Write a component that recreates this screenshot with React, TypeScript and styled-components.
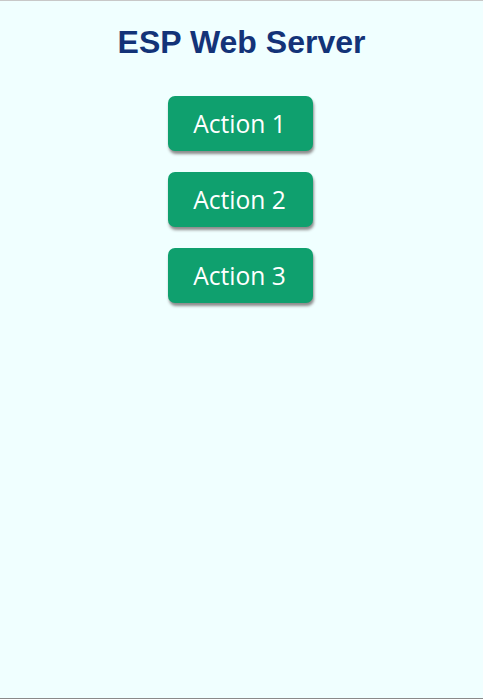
import React from 'react';
import styled, { createGlobalStyle } from 'styled-components';

const GlobalStyle = createGlobalStyle`
    html, body {
        margin: 0;
        padding: 0;
        background: #f0ffff;
    }
`;

const Page = styled.div`
    min-height: 100vh;
    box-sizing: border-box;
    border-top: 1px solid #c8c8c8;
    display: flex;
    flex-direction: column;
    align-items: center;
    padding-top: 23px;
`;

const Title = styled.h1`
    margin: 0 0 35px;
    font-family: "Liberation Sans", Arial, sans-serif;
    font-size: 32px;
    font-weight: bold;
    color: #133378;
    text-align: center;
`;

const ButtonList = styled.div`
    display: flex;
    flex-direction: column;
    align-items: center;
    gap: 21px;
    margin-right: 2px;
`;

const ActionButton = styled.button`
    width: 145px;
    height: 55px;
    padding: 0 2px 0 0;
    border: none;
    border-radius: 7px;
    background: #0fa06e;
    color: #ffffff;
    font-family: "Open Sans", sans-serif;
    font-size: 24.6px;
    box-shadow: 1px 3px 3px #8c8c8c;
    cursor: pointer;
`;

const Footer = styled.div`
    margin-top: auto;
    width: 100%;
    height: 1px;
    background: #8a8a8a;
`;

const actions = ['Action 1', 'Action 2', 'Action 3'];

const App: React.FC = () => {
    return (
        <>
            <GlobalStyle />
            <Page>
                <Title>ESP Web Server</Title>
                <ButtonList>
                    {actions.map((a) => (
                        <ActionButton key={a}>{a}</ActionButton>
                    ))}
                </ButtonList>
                <Footer />
            </Page>
        </>
    );
};

export default App;
